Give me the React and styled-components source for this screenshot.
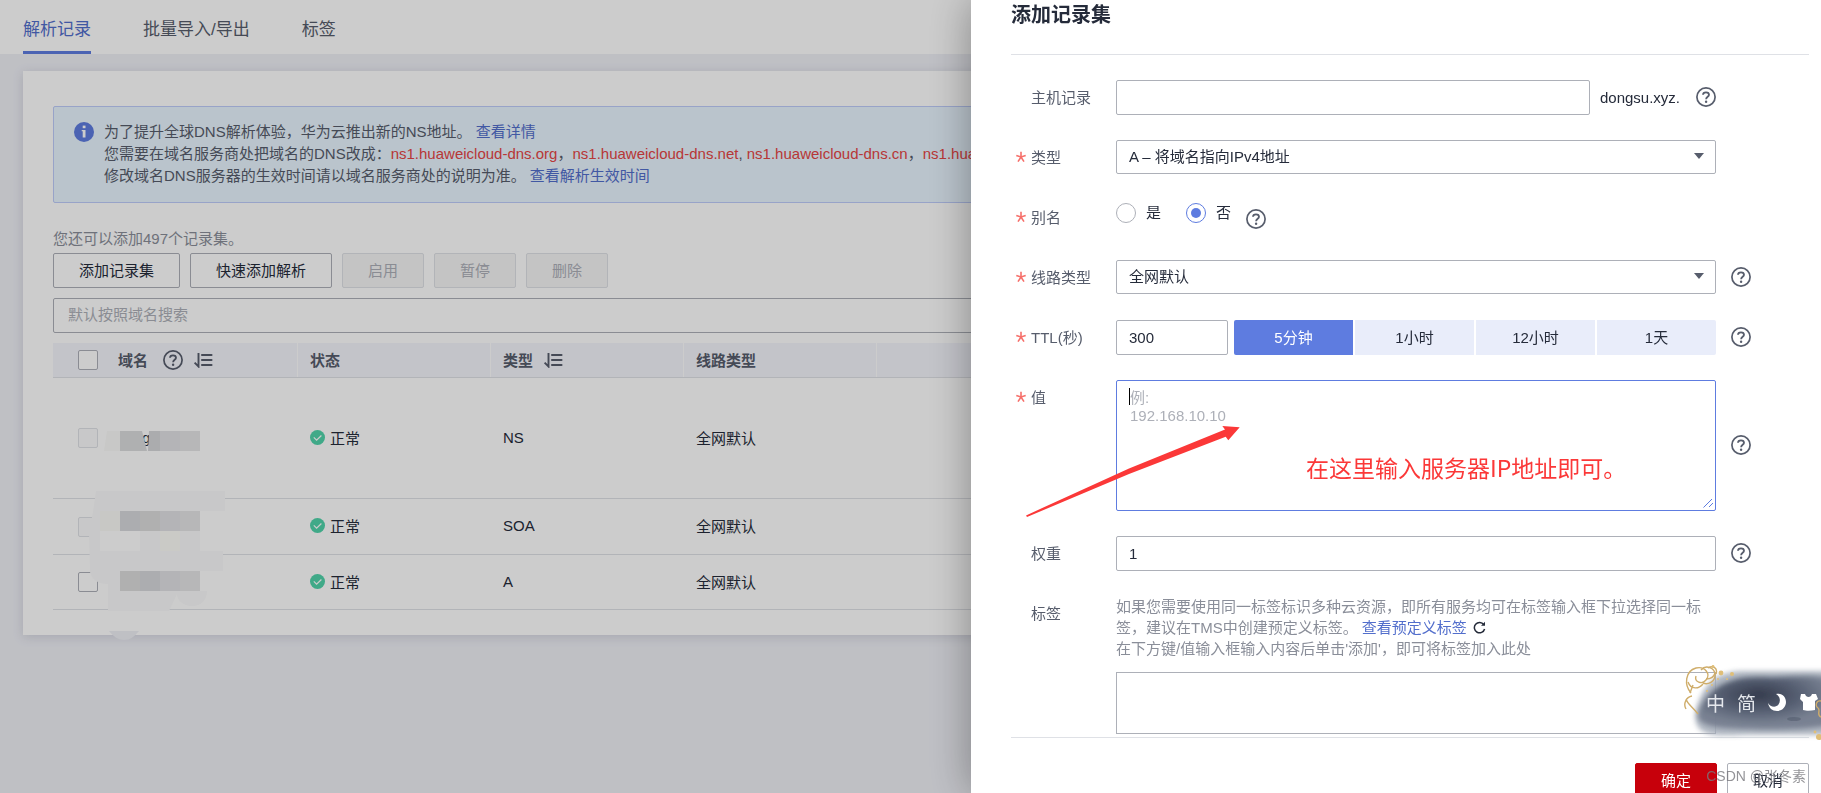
import { useState } from "react";
import styled, { createGlobalStyle, css } from "styled-components";

const colors = {
  text: "#252b3a",
  label: "#575d6c",
  aid: "#8a8e99",
  border: "#adb0b8",
  line: "#dfe1e6",
  brand: "#5e7ce0",
  link: "#526ecc",
};

const ttlOptions = [
  { label: "5分钟", value: "300" },
  { label: "1小时", value: "3600" },
  { label: "12小时", value: "43200" },
  { label: "1天", value: "86400" },
];

const records = [
  { type: "NS", line: "全网默认", size: 121, locked: true },
  { type: "SOA", line: "全网默认", size: 56, locked: true },
  { type: "A", line: "全网默认", size: 55, locked: false },
];

const HelpIcon = () => (
  <svg width="20" height="20" viewBox="0 0 20 20" fill="none">
    <circle cx="10" cy="10" r="9.1" stroke={colors.label} strokeWidth="1.7" />
    <path
      d="M7 7.8C7 6.2 8.3 5.3 10 5.3s3 1 3 2.5c0 2-2.9 2-2.9 4.4"
      stroke={colors.label}
      strokeWidth="1.8"
    />
    <circle cx="10.1" cy="14.7" r="1.2" fill={colors.label} />
  </svg>
);

const Help = () => (
  <HelpButton type="button" aria-label="帮助">
    <HelpIcon />
  </HelpButton>
);

const SortIcon = () => (
  <svg width="20" height="16" viewBox="0 0 20 16" fill="none">
    <path d="M5.5 1v13.5L1.6 10.6" stroke={colors.label} strokeWidth="1.9" />
    <path
      d="M9 3h9.5M9 8h9.5M9 13h9.5"
      stroke={colors.label}
      strokeWidth="2.1"
      strokeLinecap="round"
    />
  </svg>
);

const InfoIcon = () => (
  <svg width="20" height="20" viewBox="0 0 20 20">
    <circle cx="10" cy="10" r="10" fill={colors.brand} />
    <rect x="8.7" y="3.6" width="2.8" height="2.6" fill="#fff" />
    <path d="M7.7 8h3.8v7.6H8.7V9.2h-1z" fill="#fff" />
  </svg>
);

const OkIcon = () => (
  <svg width="15" height="15" viewBox="0 0 15 15" fill="none">
    <circle cx="7.5" cy="7.5" r="7.5" fill="#50d4ab" />
    <path d="M3.8 7.3l2.8 2.8 4.8-4.6" stroke="#fff" strokeWidth="1.2" />
  </svg>
);

const Star = () => (
  <svg width="10" height="12" viewBox="0 0 10 12" fill="none">
    <path
      d="M5 .8V6M.3 4.6L5 6l4.7-1.4M2 10.6L5 6l3 4.6"
      stroke="#f66f6a"
      strokeWidth="1.6"
    />
  </svg>
);

const Mosaic = () => (
  <MosaicSvg width="200" height="220" viewBox="40 420 200 220">
    <path d="M107 431h13v20h-16z" fill="#fbfbf9" />
    <text x="142" y="443" fontSize="15" fill={colors.text}>
      g
    </text>
    <path d="M120 431h22l5 20h-27z" fill="#dbdcde" />
    <path d="M149 431h11v20h-12z" fill="#d6d7da" />
    <path d="M160 431h20v20h-20z" fill="#e2e2e5" />
    <path d="M180 431h20v20h-20z" fill="#e5e5e7" />
    <path
      d="M96 491h129v20h-25v40h23v20h-23v20h7c0 9-6 15-15 15s-15-6-15-12l-8 17h-61v-27c-10 0-16-4-18-12l-1-40 4-20z"
      fill="#fbfbfc"
    />
    <path d="M100 531h40v20h-40z" fill="#fff" />
    <path d="M100 511h20v20h-20z" fill="#fbfbf7" />
    <path d="M160 531h20v20h-20z" fill="#fdfdf8" />
    <path d="M120 511h20v20h-20zM140 571h20v20h-20z" fill="#d8d9dc" />
    <path d="M140 511h20v20h-20zM120 571h20v20h-20z" fill="#dcdcdd" />
    <path d="M160 511h20v20h-20zM160 571h20v20h-20z" fill="#e2e2e5" />
    <path d="M180 511h20v20h-20zM180 571h20v20h-20z" fill="#e5e5e7" />
    <path d="M109 631h30c-5 6-9 9-15 9s-11-4-15-9z" fill="#eff0f6" />
  </MosaicSvg>
);

const ImeBar = () => (
  <ImeBox>
    <ImeInk width="137" height="80" viewBox="0 0 137 80">
      <defs>
        <filter id="soft" x="-20%" y="-20%" width="140%" height="140%">
          <feGaussianBlur stdDeviation="2.5" />
        </filter>
        <radialGradient id="ink" cx="0.45" cy="0.35" r="0.55">
          <stop offset="0" stopColor="#272e40" />
          <stop offset="0.55" stopColor="#4d566a" />
          <stop offset="1" stopColor="#737c8d" />
        </radialGradient>
      </defs>
      <path
        d="M12 44C20 18 32 7 58 6h92v64H60C34 71 6 74 12 44z"
        fill="#a3abb8"
        opacity="0.85"
        filter="url(#soft)"
      />
      <path
        d="M15 46C24 24 44 11 76 12s50-4 72 2v46c-30 5-56 5-84 4S9 62 15 46z"
        fill="url(#ink)"
        opacity="0.9"
        filter="url(#soft)"
      />
      <ellipse cx="110" cy="54" rx="7" ry="2" fill="#353e52" opacity="0.3" />
      <g fill="none" stroke="#cfad6a" strokeWidth="1.4">
        <path d="M7 28C0 20 1 6 12 3c9-2 15 6 10 12-4 5-12 2-10-4" />
        <path d="M4 17c3 8 11 7 15 2M17 5c5-6 14-2 14 5s-7 10-12 8" />
        <path d="M24 3c5-3 10 0 8 6M22 14c4 0 8-2 9-6M9 20l-3 8" />
        <path d="M8 31c-6 1-9 8-6 13M2 34c2 6 7 8 12 15" />
        <path d="M137 36c-5-1-6 5-3 7s-2 7 3 9" />
      </g>
      <g fill="#dfbe78">
        <circle cx="37" cy="8" r="2.4" />
        <circle cx="48" cy="9" r="2" />
        <circle cx="29" cy="1.5" r="1.4" />
        <circle cx="34" cy="14" r="1" />
        <circle cx="43" cy="14" r="1" />
        <circle cx="28" cy="20" r="1" />
        <circle cx="23" cy="26" r="1" />
        <circle cx="135" cy="72" r="3" />
        <circle cx="131" cy="67" r="1.4" />
      </g>
    </ImeInk>
    <ImeKeys>
      <span>中</span>
      <span>简</span>
      <svg width="18" height="18" viewBox="0 0 18 18">
        <path
          d="M8 1c6-1.6 10 3 10 8s-4 9-9 9C4 18 1 15 0 10c2 4 8 5 10.5 1.5C13 8 12 3 8 1z"
          fill="#fff"
        />
      </svg>
      <svg width="20" height="18" viewBox="0 0 20 18">
        <path
          d="M3 1h4c1 4 6 4 7 0h4l2 5-3 2v9c-4 1-9 1-12 0V9L2 6z"
          fill="#fff"
        />
      </svg>
    </ImeKeys>
  </ImeBox>
);

const Field = ({ label, htmlFor, required, children }) => (
  <FieldRow>
    <FieldLabel htmlFor={htmlFor}>
      <Mark>{required && <Star />}</Mark>
      {label}
    </FieldLabel>
    {children}
  </FieldRow>
);

const Dropdown = ({ id, children }) => (
  <SelectBox>
    <Select id={id}>{children}</Select>
    <svg width="10" height="6" viewBox="0 0 10 6">
      <path d="M0 0h10L5 6z" fill={colors.label} />
    </svg>
  </SelectBox>
);

const RecordTable = () => (
  <TableBox>
    <Table>
      <colgroup>
        <col width="65" />
        <col width="179" />
        <col width="193" />
        <col width="193" />
        <col width="193" />
        <col />
      </colgroup>
      <thead>
        <tr>
          <Th $check>
            <Checkbox type="checkbox" aria-label="全选" />
          </Th>
          <Th $flush>
            <HeadCell>
              域名
              <HeadIcons $wide>
                <Help />
                <SortIcon />
              </HeadIcons>
            </HeadCell>
          </Th>
          <Th $divided>状态</Th>
          <Th $divided>
            <HeadCell>
              类型
              <HeadIcons>
                <SortIcon />
              </HeadIcons>
            </HeadCell>
          </Th>
          <Th $divided>线路类型</Th>
          <Th $divided />
        </tr>
      </thead>
      <tbody>
        {records.map((record) => (
          <Tr key={record.type} $size={record.size}>
            <Td $check>
              <Checkbox
                type="checkbox"
                aria-label={record.type}
                disabled={record.locked}
              />
            </Td>
            <Td />
            <Td>
              <Status>
                <OkIcon />
                正常
              </Status>
            </Td>
            <Td>{record.type}</Td>
            <Td>{record.line}</Td>
            <Td />
          </Tr>
        ))}
      </tbody>
    </Table>
    <Mosaic />
  </TableBox>
);

const RecordPage = () => (
  <Page>
    <Tabs>
      <Tab href="#records" $active>
        解析记录
      </Tab>
      <Tab href="#batch">批量导入/导出</Tab>
      <Tab href="#tags">标签</Tab>
    </Tabs>
    <Card>
      <Notice>
        <InfoIcon />
        <div>
          <p>
            为了提升全球DNS解析体验，华为云推出新的NS地址。{" "}
            <Link href="#detail">查看详情</Link>
          </p>
          <p>
            您需要在域名服务商处把域名的DNS改成：<b>ns1.huaweicloud-dns.org</b>
            ，<b>ns1.huaweicloud-dns.net</b>, <b>ns1.huaweicloud-dns.cn</b>，
            <b>ns1.huaweicloud-dns.com</b>
          </p>
          <p>
            修改域名DNS服务器的生效时间请以域名服务商处的说明为准。{" "}
            <Link href="#ttl">查看解析生效时间</Link>
          </p>
        </div>
      </Notice>
      <Quota>您还可以添加497个记录集。</Quota>
      <Toolbar>
        <Button>添加记录集</Button>
        <Button>快速添加解析</Button>
        <Button disabled>启用</Button>
        <Button disabled>暂停</Button>
        <Button disabled>删除</Button>
      </Toolbar>
      <Search placeholder="默认按照域名搜索" aria-label="搜索" />
      <RecordTable />
    </Card>
  </Page>
);

const RecordDrawer = () => {
  const [ttl, setTtl] = useState("300");
  const [alias, setAlias] = useState("no");

  return (
    <Drawer role="dialog" aria-labelledby="drawer-title">
      <DrawerTitle id="drawer-title">添加记录集</DrawerTitle>
      <Form>
        <Field label="主机记录" htmlFor="host">
          <Control>
            <Input id="host" />
            <Suffix>dongsu.xyz.</Suffix>
            <Help />
          </Control>
        </Field>
        <Field label="类型" htmlFor="type" required>
          <Control>
            <Dropdown id="type">
              <option>A – 将域名指向IPv4地址</option>
            </Dropdown>
          </Control>
        </Field>
        <Field label="别名" htmlFor="alias-no" required>
          <RadioGroup>
            <RadioLabel>
              <Radio
                name="alias"
                checked={alias === "yes"}
                onChange={() => setAlias("yes")}
              />
              <span>是</span>
            </RadioLabel>
            <RadioLabel>
              <Radio
                id="alias-no"
                name="alias"
                checked={alias === "no"}
                onChange={() => setAlias("no")}
              />
              <span>否</span>
            </RadioLabel>
            <Help />
          </RadioGroup>
        </Field>
        <Field label="线路类型" htmlFor="line" required>
          <Control>
            <Dropdown id="line">
              <option>全网默认</option>
            </Dropdown>
          </Control>
          <Help />
        </Field>
        <Field label="TTL(秒)" htmlFor="ttl" required>
          <Control $tight>
            <Input
              id="ttl"
              $short
              value={ttl}
              onChange={(e) => setTtl(e.target.value)}
            />
            <Segments>
              {ttlOptions.map((option) => (
                <Segment
                  key={option.value}
                  type="button"
                  $active={ttl === option.value}
                  onClick={() => setTtl(option.value)}
                >
                  {option.label}
                </Segment>
              ))}
            </Segments>
          </Control>
          <Help />
        </Field>
        <Field label="值" htmlFor="value" required>
          <Control>
            <TextArea id="value" placeholder={"例:\n192.168.10.10"} />
            <Caret />
            <Grip width="10" height="10" viewBox="0 0 10 10" fill="none">
              <path d="M.5 9.5l8.5-8.5M6 9l4-4" stroke={colors.brand} />
            </Grip>
            <Arrow width="214" height="92" viewBox="0 0 214 92">
              <path
                d="M0 90.4L103 43.5 199 4.500 196.300 1 213.700 2.300 202.300 15.300 199.700 11.700 103 49 1 92z"
                fill="#fb3838"
              />
            </Arrow>
            <Annotation>在这里输入服务器IP地址即可。</Annotation>
          </Control>
          <Help />
        </Field>
        <Field label="权重" htmlFor="weight">
          <Control>
            <Input id="weight" defaultValue="1" />
          </Control>
          <Help />
        </Field>
        <Field label="标签" htmlFor="tags">
          <TagArea>
            <p>
              如果您需要使用同一标签标识多种云资源，即所有服务均可在标签输入框下拉选择同一标签，建议在TMS中创建预定义标签。{" "}
              <Link href="#tms">查看预定义标签</Link>
              <Reload type="button" aria-label="刷新">
                <svg width="13" height="13" viewBox="0 0 13 13" fill="none">
                  <path
                    d="M10.8 3.6A5.2 5.2 0 1 0 11.6 8"
                    stroke={colors.text}
                    strokeWidth="1.5"
                  />
                  <path d="M12 .8v4H8z" fill={colors.text} />
                </svg>
              </Reload>
            </p>
            <p>在下方键/值输入框输入内容后单击'添加'，即可将标签加入此处</p>
            <TagBox id="tags" />
          </TagArea>
        </Field>
      </Form>
      <Footer>
        <Button $primary>确定</Button>
        <Button>取消</Button>
        <Watermark>CSDN @张冬素</Watermark>
      </Footer>
      <ImeBar />
    </Drawer>
  );
};

const App = () => (
  <>
    <GlobalStyle />
    <RecordPage />
    <Mask />
    <RecordDrawer />
  </>
);

export default App;

const GlobalStyle = createGlobalStyle`
  * {
    box-sizing: border-box;
  }
  body {
    margin: 0;
    background: #eff0f6;
    color: ${colors.text};
  }
  body, button, input, select, textarea {
    font-family: "Liberation Sans", "Noto Sans CJK SC", sans-serif;
    font-size: 15px;
  }
  p {
    margin: 0;
  }
  svg {
    display: block;
    flex: none;
  }
`;

const Page = styled.main`
  min-height: 100vh;
`;

const Tabs = styled.nav`
  display: flex;
  gap: 52px;
  height: 54px;
  padding: 0 23px;
  background: #fff;
`;

const Tab = styled.a`
  display: flex;
  align-items: center;
  padding-top: 4px;
  border-bottom: 3px solid
    ${({ $active }) => ($active ? colors.brand : "transparent")};
  color: ${({ $active }) => ($active ? colors.link : colors.label)};
  font-size: 17px;
  text-decoration: none;
`;

const Card = styled.section`
  margin: 17px 23px 0;
  padding: 35px 30px 25px;
  background: #fff;
  box-shadow: 0 2px 10px rgba(90, 95, 120, 0.2);
`;

const Notice = styled.div`
  display: flex;
  gap: 10px;
  padding: 14px 20px 15px;
  border: 1px solid #beccfa;
  border-radius: 2px;
  background: #e9f5ff;
  color: ${colors.label};
  line-height: 22px;
  overflow: hidden;
  white-space: nowrap;
  b {
    color: #e54545;
    font-weight: normal;
  }
  > svg {
    margin-top: 1px;
  }
`;

const Link = styled.a`
  color: ${colors.link};
  text-decoration: none;
`;

const Quota = styled.p`
  margin: 25px 0 3px;
  color: ${colors.aid};
  line-height: 22px;
`;

const Toolbar = styled.div`
  display: flex;
  gap: 10px;
`;

const Button = styled.button`
  height: 35px;
  padding: 0 25px 3px;
  border: 1px solid ${colors.border};
  border-radius: 2px;
  background: #fff;
  color: ${colors.text};
  &:disabled {
    border-color: ${colors.line};
    background: #f5f5f6;
    color: ${colors.border};
  }
  ${({ $primary }) =>
    $primary &&
    css`
      border-color: #c7000b;
      background: #c7000b;
      color: #fff;
    `}
`;

const inputBase = css`
  height: 35px;
  border: 1px solid ${colors.border};
  border-radius: 2px;
  background: #fff;
  color: ${colors.text};
  outline: none;
  &::placeholder {
    color: ${colors.border};
  }
`;

const Search = styled.input`
  ${inputBase}
  display: block;
  width: 100%;
  margin: 10px 0;
  padding: 0 14px 2px;
`;

const TableBox = styled.div`
  position: relative;
`;

const Table = styled.table`
  width: 100%;
  table-layout: fixed;
  border-spacing: 0;
`;

const cellBase = css`
  padding: 0 13px 2px;
  border-bottom: 1px solid ${colors.line};
  text-align: left;
  ${({ $check }) => $check && "padding: 0 0 0 25px;"}
`;

const Th = styled.th`
  ${cellBase}
  height: 35px;
  background: #f4f5fc;
  color: ${colors.label};
  ${({ $flush }) => $flush && "padding-left: 0;"}
  ${({ $divided }) =>
    $divided && "background: linear-gradient(90deg, #fff 1px, #f4f5fc 1px);"}
`;

const Tr = styled.tr`
  height: ${({ $size }) => $size}px;
`;

const Td = styled.td`
  ${cellBase}
`;

const HeadCell = styled.div`
  display: flex;
  align-items: center;
`;

const HeadIcons = styled.span`
  display: flex;
  align-items: center;
  gap: 10px;
  margin-left: ${({ $wide }) => ($wide ? 15 : 10)}px;
  padding-top: 2px;
`;

const Status = styled.span`
  display: flex;
  align-items: center;
  gap: 5px;
`;

const Checkbox = styled.input`
  display: block;
  appearance: none;
  width: 20px;
  height: 20px;
  margin: 0;
  border: 1px solid ${colors.border};
  border-radius: 2px;
  background: #fff;
  &:disabled {
    border-color: ${colors.line};
    background: #fbfbfc;
  }
`;

/* smudged out domain names, lies over the rows */
const MosaicSvg = styled.svg`
  position: absolute;
  left: -13px;
  top: 77px;
`;

const HelpButton = styled.button`
  flex: none;
  margin-bottom: 1px;
  padding: 0;
  border: 0;
  background: none;
`;

const Mask = styled.div`
  position: fixed;
  inset: 0;
  background: rgba(0, 0, 0, 0.2);
`;

const Drawer = styled.aside`
  position: fixed;
  top: 0;
  right: 0;
  bottom: 0;
  width: 850px;
  max-width: 100%;
  padding: 0 12px 0 40px;
  background: #fff;
  box-shadow: 0 0 40px rgba(0, 0, 0, 0.35);
  overflow: hidden;
`;

const DrawerTitle = styled.h2`
  margin: 0;
  padding: 1px 0 25px;
  border-bottom: 1px solid ${colors.line};
  font-size: 20px;
  line-height: 28px;
`;

const Form = styled.form`
  display: flex;
  flex-direction: column;
  gap: 25px;
  padding: 25px 0 3px;
`;

const FieldRow = styled.div`
  display: flex;
  align-items: center;
  min-height: 35px;
`;

const FieldLabel = styled.label`
  display: flex;
  align-items: center;
  align-self: flex-start;
  flex: none;
  width: 105px;
  height: 35px;
  padding-bottom: 2px;
  color: ${colors.label};
`;

const Mark = styled.span`
  width: 20px;
  padding-left: 5px;
`;

const Control = styled.div`
  position: relative;
  display: flex;
  align-items: center;
  align-self: flex-start;
  gap: ${({ $tight }) => ($tight ? 6 : 10)}px;
  flex: 0 1 600px;
  min-width: 0;
  margin-right: 15px;
`;

const Input = styled.input`
  ${inputBase}
  flex: ${({ $short }) => ($short ? "0 0 112px" : "1")};
  min-width: 0;
  padding: 0 12px;
`;

const Suffix = styled.span`
  margin-right: 6px;
`;

const SelectBox = styled.div`
  position: relative;
  flex: 1;
  > svg {
    position: absolute;
    right: 12px;
    top: 13px;
    pointer-events: none;
  }
`;

const Select = styled.select`
  ${inputBase}
  display: block;
  appearance: none;
  width: 100%;
  height: 34px;
  padding: 0 12px 2px;
`;

const RadioGroup = styled.div`
  display: flex;
  gap: 25px;
  align-self: flex-start;
  height: 30px;
  > button {
    align-self: flex-end;
    margin-left: -10px;
  }
`;

const RadioLabel = styled.label`
  display: flex;
  align-items: center;
  gap: 10px;
  height: 26px;
  > span {
    padding-bottom: 4px;
  }
`;

const Radio = styled.input.attrs({ type: "radio" })`
  appearance: none;
  display: grid;
  place-items: center;
  width: 20px;
  height: 20px;
  margin: 0;
  border: 1px solid ${colors.border};
  border-radius: 50%;
  &:checked {
    border-color: ${colors.brand};
  }
  &:checked::before {
    content: "";
    width: 10px;
    height: 10px;
    border-radius: 50%;
    background: ${colors.brand};
  }
`;

const Segments = styled.div`
  display: flex;
  flex: 1;
  gap: 2px;
`;

const Segment = styled.button`
  flex: 1;
  height: 35px;
  padding: 0 0 2px;
  border: 0;
  background: ${({ $active }) => ($active ? colors.brand : "#e9edfa")};
  color: ${({ $active }) => ($active ? "#fff" : colors.text)};
  &:first-child {
    border-radius: 2px 0 0 2px;
  }
  &:last-child {
    border-radius: 0 2px 2px 0;
  }
`;

const TextArea = styled.textarea`
  ${inputBase}
  display: block;
  flex: 1;
  height: 131px;
  padding: 8px 13px;
  border-color: ${colors.brand};
  line-height: 18px;
  resize: none;
`;

const Caret = styled.span`
  position: absolute;
  left: 13px;
  top: 8px;
  width: 1px;
  height: 17px;
  background: #000;
`;

const Grip = styled.svg`
  position: absolute;
  right: 3px;
  bottom: 3px;
`;

const Arrow = styled.svg`
  position: absolute;
  left: -90px;
  top: 45px;
  pointer-events: none;
`;

const Annotation = styled.span`
  position: absolute;
  left: 190px;
  top: 72px;
  color: #fb3838;
  font-family: "Noto Sans CJK SC", sans-serif;
  font-size: 23px;
  line-height: 30px;
  white-space: nowrap;
  pointer-events: none;
`;

const TagArea = styled.div`
  flex: 0 1 600px;
  color: ${colors.aid};
  line-height: 21px;
  p {
    padding-right: 10px;
  }
`;

const Reload = styled.button`
  margin-left: 6px;
  padding: 0;
  border: 0;
  background: none;
  vertical-align: -1px;
`;

const TagBox = styled.textarea`
  ${inputBase}
  display: block;
  width: 100%;
  height: 62px;
  margin-top: 13px;
  border-radius: 0;
  resize: none;
`;

const Footer = styled.footer`
  position: relative;
  display: flex;
  justify-content: flex-end;
  gap: 10px;
  padding-top: 25px;
  border-top: 1px solid ${colors.line};
`;

const Watermark = styled.span`
  position: absolute;
  right: 3px;
  top: 28px;
  color: rgba(120, 120, 125, 0.8);
  font-size: 14px;
  line-height: 20px;
  white-space: nowrap;
  pointer-events: none;
`;

const ImeBox = styled.div`
  position: absolute;
  right: 0;
  top: 665px;
  width: 137px;
  height: 80px;
`;

const ImeInk = styled.svg`
  position: absolute;
  inset: 0;
`;

const ImeKeys = styled.div`
  position: relative;
  display: flex;
  align-items: center;
  gap: 12px;
  height: 74px;
  padding-left: 22px;
  color: #e4e7ec;
  font-size: 19px;
`;
